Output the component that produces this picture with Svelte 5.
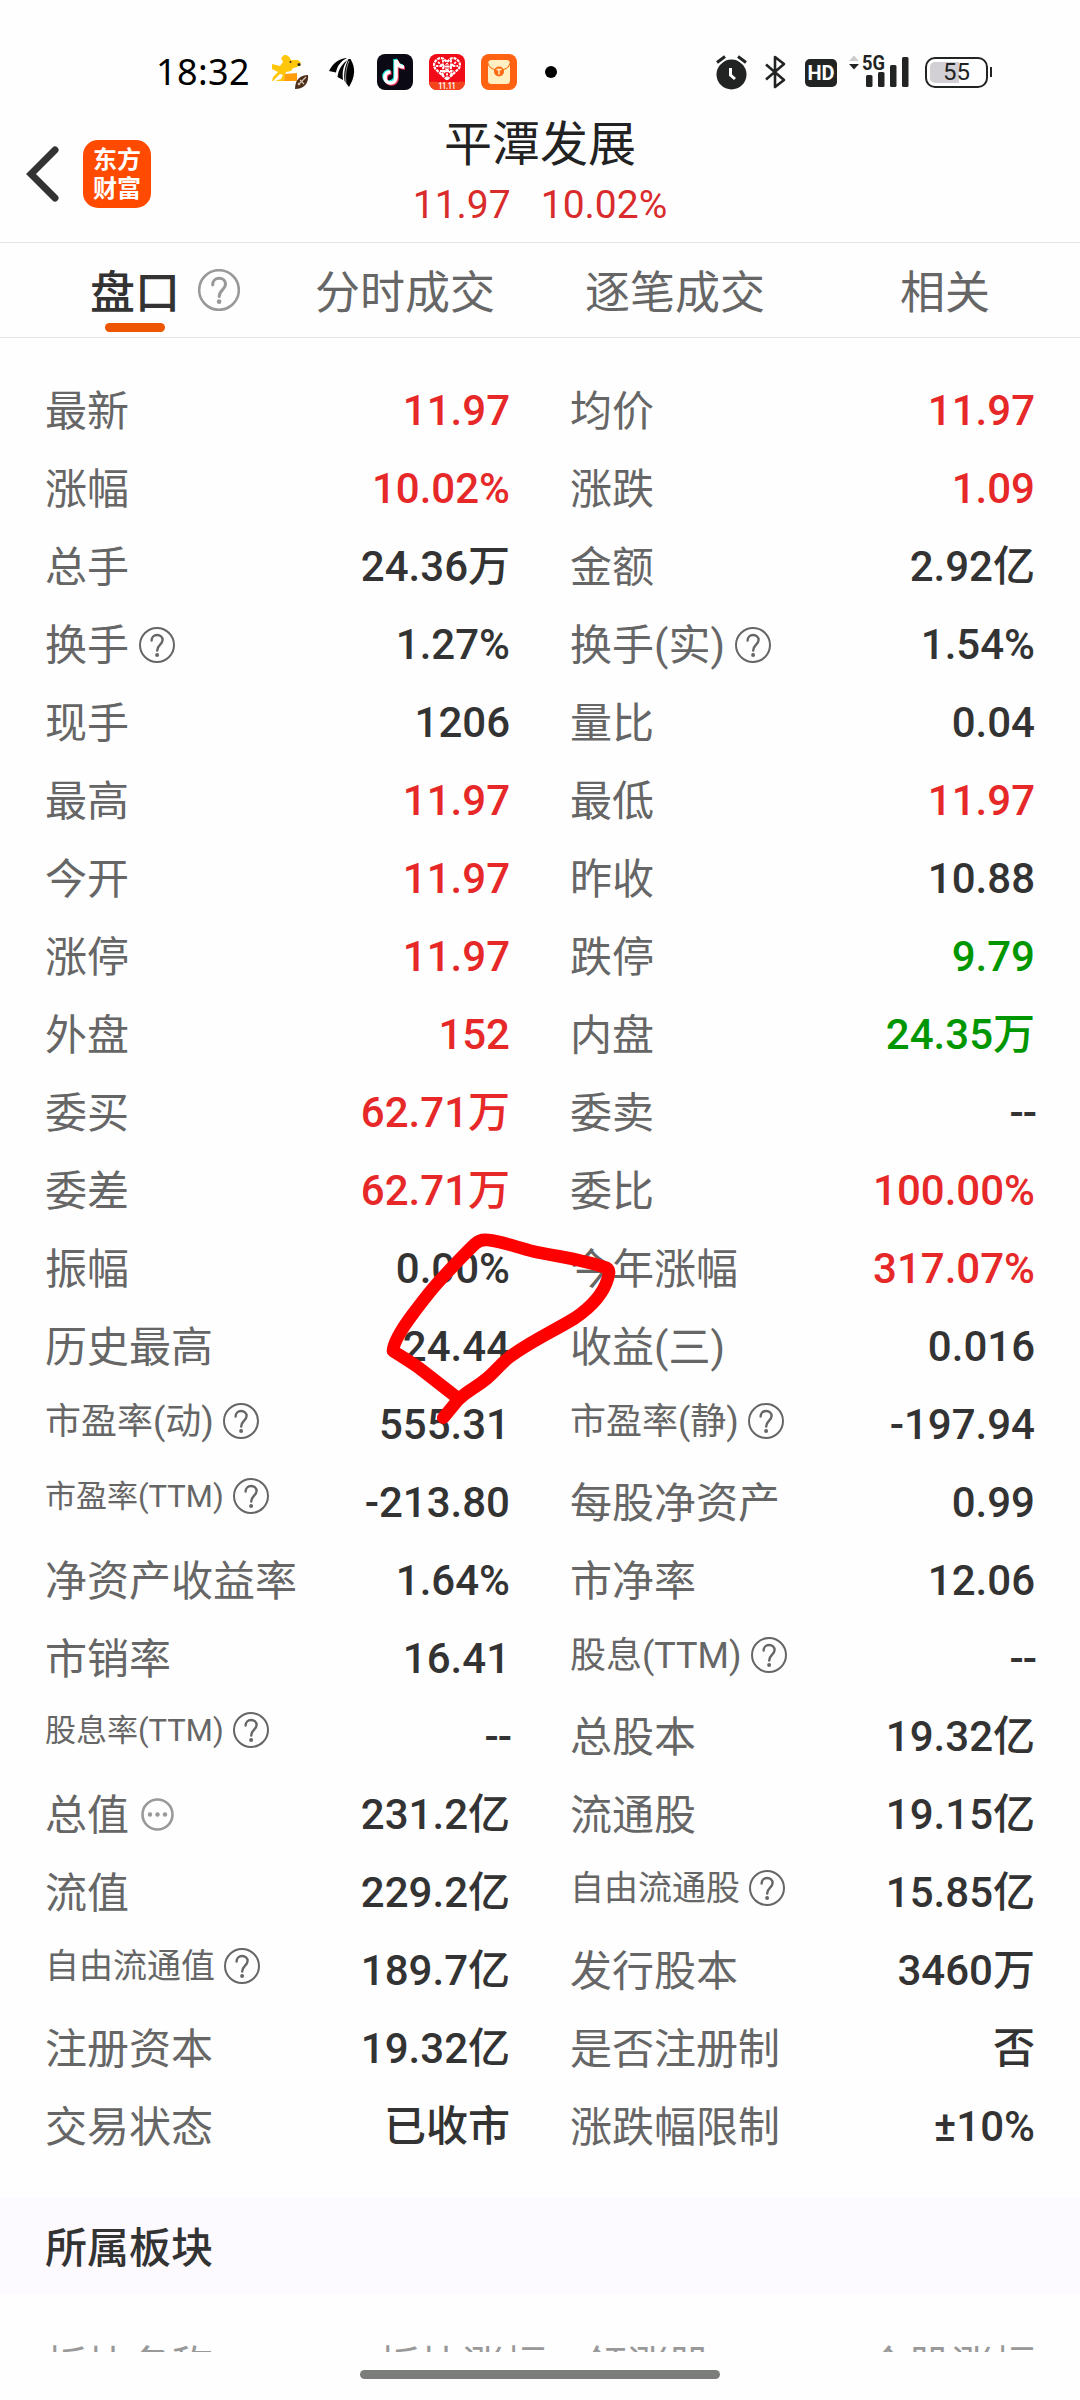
<script lang="ts">
  type Cell = {
    label: string;
    value: string;
    tone?: "up" | "down";
    size?: "s36" | "s34" | "s31";
    icon?: "help" | "more";
  };

  const tabs = ["盘口", "分时成交", "逐笔成交", "相关"];
  let active = $state(0);

  const cells: Cell[] = [
    { label: "最新", value: "11.97", tone: "up" },
    { label: "均价", value: "11.97", tone: "up" },
    { label: "涨幅", value: "10.02%", tone: "up" },
    { label: "涨跌", value: "1.09", tone: "up" },
    { label: "总手", value: "24.36万" },
    { label: "金额", value: "2.92亿" },
    { label: "换手", value: "1.27%", icon: "help" },
    { label: "换手(实)", value: "1.54%", icon: "help" },
    { label: "现手", value: "1206" },
    { label: "量比", value: "0.04" },
    { label: "最高", value: "11.97", tone: "up" },
    { label: "最低", value: "11.97", tone: "up" },
    { label: "今开", value: "11.97", tone: "up" },
    { label: "昨收", value: "10.88" },
    { label: "涨停", value: "11.97", tone: "up" },
    { label: "跌停", value: "9.79", tone: "down" },
    { label: "外盘", value: "152", tone: "up" },
    { label: "内盘", value: "24.35万", tone: "down" },
    { label: "委买", value: "62.71万", tone: "up" },
    { label: "委卖", value: "--" },
    { label: "委差", value: "62.71万", tone: "up" },
    { label: "委比", value: "100.00%", tone: "up" },
    { label: "振幅", value: "0.00%" },
    { label: "今年涨幅", value: "317.07%", tone: "up" },
    { label: "历史最高", value: "24.44" },
    { label: "收益(三)", value: "0.016" },
    { label: "市盈率(动)", value: "555.31", size: "s36", icon: "help" },
    { label: "市盈率(静)", value: "-197.94", size: "s36", icon: "help" },
    { label: "市盈率(TTM)", value: "-213.80", size: "s31", icon: "help" },
    { label: "每股净资产", value: "0.99" },
    { label: "净资产收益率", value: "1.64%" },
    { label: "市净率", value: "12.06" },
    { label: "市销率", value: "16.41" },
    { label: "股息(TTM)", value: "--", size: "s36", icon: "help" },
    { label: "股息率(TTM)", value: "--", size: "s31", icon: "help" },
    { label: "总股本", value: "19.32亿" },
    { label: "总值", value: "231.2亿", icon: "more" },
    { label: "流通股", value: "19.15亿" },
    { label: "流值", value: "229.2亿" },
    { label: "自由流通股", value: "15.85亿", size: "s34", icon: "help" },
    { label: "自由流通值", value: "189.7亿", size: "s34", icon: "help" },
    { label: "发行股本", value: "3460万" },
    { label: "注册资本", value: "19.32亿" },
    { label: "是否注册制", value: "否" },
    { label: "交易状态", value: "已收市" },
    { label: "涨跌幅限制", value: "±10%" },
  ];
</script>

{#snippet help(size: number, stroke: number)}
  <svg class="help" width={size} height={size} viewBox="0 0 36 36" fill="none" stroke="currentColor" stroke-width={stroke}>
    <circle cx="18" cy="18" r="17" />
    <path d="M12.6 13.6c0-3.4 2.4-5.6 5.5-5.6s5.5 2.100 5.500 5.100c0 4.400-5.400 4.900-5.400 10.400" stroke-linecap="round" stroke-width={stroke * 1.2} />
    <circle cx="18.100" cy="28" r="2" fill="currentColor" stroke="none" />
  </svg>
{/snippet}

<div class="screen">
  <div class="status">
    <span class="time">18:32</span>
    <svg class="app dog" width="37" height="36" viewBox="0 0 37 36">
      <path d="M0 10l8 2 3-4-2-4 3-3c4 0 6 2 7 5h5c3 0 5 2 5 5-3 1-5 3-8 3l-2 3-5 1-2 9H0l1-4 5-5-6-3z" fill="#ffc60a" />
      <path d="M13 20l12-1v8H12z" fill="#ff9d0a" />
      <path d="M4 24l4-4 3 1-2 4-9 3z" fill="#fefefe" />
      <circle cx="18.500" cy="8" r="1" fill="#222" />
      <circle cx="27" cy="10.500" r="1.500" fill="#222" />
      <path d="M23 35c0-9 5-14 13-14 1 8-4 14-13 14z" fill="#4b2d1c" />
      <path d="M26 31l8-8M28 26l4 4M26 29l2 2" stroke="#d9c4ae" stroke-width="1.200" />
    </svg>
    <svg class="app wing" width="27" height="30" viewBox="0 0 27 30">
      <path d="M18 1C11 1 4 6 0 14l7 1.500C8 9 12 4 18 1z" />
      <path d="M19 2.500C13 7 9.500 12 8.500 20l5.500 3C13 14 14.500 8 19 2.500z" />
      <path d="M19.500 2C16 9 14.500 16 15.500 24l4.500 6c6-10 7-19 1.500-28z" />
      <path d="M20 4c-3 7-4 14-3 22" fill="none" stroke="#fff" stroke-width=".6" />
    </svg>
    <svg class="app" width="36" height="36" viewBox="0 0 36 36">
      <rect width="36" height="36" rx="8" fill="#0b0a14" />
      <g fill="none" stroke-width="3.600">
        <path d="M18 5v17.500a5.500 5.500 0 1 1-5.500-5.500M18 5c1 4 4 7 8 7" stroke="#25e5e0" />
        <path d="M20 7v17.500a5.500 5.500 0 1 1-5.500-5.500M20 7c1 4 4 7 8 7" stroke="#f5335c" />
        <path d="M19 6v17.500a5.500 5.500 0 1 1-5.500-5.500M19 6c1 4 4 7 8 7" stroke="#fff" />
      </g>
    </svg>
    <svg class="app" width="36" height="36" viewBox="0 0 36 36">
      <rect width="36" height="36" rx="8" fill="#f10a18" />
      <path d="M0 28q5-1 8 0h20q4-1 8 0a8 8 0 0 1-8 8H8a8 8 0 0 1-8-8z" fill="#f4441e" />
      <path d="M18 25.500L6.500 15C2 9 9 2.500 14 4.500L18 8l4-3.500C27 2.500 34 9 29.500 15z" fill="none" stroke="#fff" stroke-width="2.200" stroke-dasharray="3 .8" />
      <path d="M9 8l15 13M27 8L12 21M7 12h22M11 17h14M14 6v15M22 6v15M18 9v16" stroke="#fff" stroke-width="1.800" stroke-dasharray="2.400 1" />
      <rect x="15.500" y="10" width="5" height="5" fill="#f10a18" />
      <path d="M17 10v5M19 10v5M15.500 12.500h5" stroke="#fff" />
      <text x="18" y="34.500" text-anchor="middle" textLength="17" lengthAdjust="spacingAndGlyphs" class="tiny">11.11</text>
    </svg>
    <svg class="app" width="36" height="36" viewBox="0 0 36 36">
      <rect width="36" height="36" rx="8" fill="#ff6211" />
      <rect x="7" y="6" width="22" height="24" rx="3.500" fill="#fff0c4" />
      <path d="M7 9c1 5 4 7 11 7s10-2 11-7" fill="none" stroke="#f7791e" stroke-width="1.200" />
      <circle cx="18" cy="17.500" r="5" fill="#ff6a13" />
      <path d="M15.500 15.500h5M18 15.500v5" stroke="#fff0c4" stroke-width="1.500" />
    </svg>
    <span class="dot"></span>

    <div class="system">
      <svg width="31" height="35" viewBox="0 0 31 35">
        <circle cx="15.500" cy="19.500" r="15" fill="#222423" />
        <path d="M1 7.500l8-6M30 7.500L22 1.500" stroke="#fefefe" stroke-width="7" />
        <path d="M1 7.500l8-6M30 7.500L22 1.500" stroke="#222423" stroke-width="3" />
        <path d="M14.500 13v7l4.500 4" fill="none" stroke="#fff" stroke-width="3" />
      </svg>
      <svg class="bt" width="22" height="34" viewBox="0 0 22 34">
        <path d="M1 9.500l18 15.500-9 7V2l9 7L1 24.500" fill="none" stroke="#222423" stroke-width="2.600" stroke-linejoin="round" />
      </svg>
      <span class="hd">HD</span>
      <svg class="signal" width="62" height="34" viewBox="0 0 62 34">
        <path d="M0 6l5-5.500L10 6z" fill="#ccc" />
        <path d="M0 9h10l-5 5.500z" fill="#222423" />
        <g fill="#222423">
          <rect x="17" y="20" width="6.500" height="12" rx="1.500" />
          <rect x="29" y="17" width="6.500" height="15" rx="1.500" />
          <rect x="41" y="10" width="6.500" height="22" rx="1.500" />
          <rect x="53" y="2" width="6.500" height="30" rx="1.500" />
        </g>
        <text x="13" y="15.300" textLength="23" lengthAdjust="spacingAndGlyphs" class="five">5G</text>
      </svg>
      <div class="battery">
        <span class="charge">55</span>
      </div>
      <span class="nub"></span>
    </div>
  </div>

  <header>
    <svg class="back" width="36" height="60" viewBox="0 0 36 60">
      <path d="M31 6L7 30l24 24" fill="none" stroke="#333" stroke-width="7" stroke-linecap="round" />
    </svg>
    <div class="logo">东方<br />财富</div>
    <div class="heading">
      <h1>平潭发展</h1>
      <p><span>11.97</span><span>10.02%</span></p>
    </div>
  </header>

  <nav>
    {#each tabs as tab, i}
      <button class="tab" class:tab--active={active === i} onclick={() => (active = i)}>
        {tab}
        {#if i === 0}
          <span class="tab-help">{@render help(42, 2.2)}</span>
        {/if}
      </button>
    {/each}
  </nav>

  <div class="quotes">
    {#each cells as cell}
      <div class="cell">
        <div class="label {cell.size ?? ''}">
          <span>{cell.label}</span>
          {#if cell.icon === "help"}
            {@render help(36, 2)}
          {:else if cell.icon === "more"}
            <svg class="more" width="33" height="33" viewBox="0 0 33 33">
              <circle cx="16.500" cy="16.500" r="15" fill="none" stroke="#999" stroke-width="2.600" />
              <g fill="#999">
                <circle cx="9" cy="16.500" r="2.200" />
                <circle cx="16.500" cy="16.500" r="2.200" />
                <circle cx="24" cy="16.500" r="2.200" />
              </g>
            </svg>
          {/if}
        </div>
        <div class="value {cell.tone ?? ''}" class:value--empty={cell.value === "--"}>{cell.value}</div>
      </div>
    {/each}
  </div>

  <h2>所属板块</h2>
  <div class="board-head">
    <span>板块名称</span>
    <span>板块涨幅</span>
    <span>领涨股</span>
    <span>个股涨幅</span>
  </div>
  <div class="home"></div>

  <!-- freehand marker stroke over the quotes -->
  <svg class="marker" width="420" height="260" viewBox="0 0 1260 780">
    <path
      d="M310 653L352 602C385 568 405 566 440 536C470 510 475 498 510 470C575 422 640 394 705 354C760 316 792 275 803 236Q812 212 800 204C730 178 650 170 580 154C530 142 490 125 445 120Q420 117 406 131C370 165 335 203 298 243C262 283 240 314 220 340C190 380 160 425 159 453C195 476 220 490 252 515L348 590"
      fill="none"
      stroke="#f00"
      stroke-width="38"
      stroke-linecap="round"
      stroke-linejoin="round"
    />
  </svg>
</div>

<style>
  :global(body) {
    background: #fefefe;
  }
  .screen {
    position: relative;
    width: 1080px;
    height: 2400px;
    overflow: hidden;
    background: #fefefe;
    color: #333;
    font-family: Roboto, "Noto Sans CJK SC", sans-serif;
  }
  svg {
    display: block;
    flex: none;
  }

  .status {
    display: flex;
    align-items: center;
    height: 76px;
    padding: 34px 88px 0 156px;
  }
  .time {
    width: 116px;
    font: 400 36px/40px "Noto Sans", sans-serif;
    letter-spacing: 0.4px;
    color: #000;
  }
  .app {
    margin-right: 16px;
  }
  .dog {
    margin-right: 20px;
  }
  .wing {
    margin-right: 21px;
  }
  .tiny {
    font: 700 9px Roboto, sans-serif;
    fill: #fff;
  }
  .dot {
    width: 12px;
    height: 12px;
    margin-left: 12px;
    border-radius: 50%;
    background: #000;
  }
  .system {
    display: flex;
    align-items: center;
    margin-left: auto;
  }
  .bt {
    margin-left: 18px;
  }
  .hd {
    width: 32px;
    height: 28px;
    margin: 2px 12px 0 18px;
    border-radius: 5px;
    background: #222423;
    color: #fff;
    font: 700 20px/29px Roboto, sans-serif;
    text-align: center;
  }
  .signal {
    overflow: visible;
  }
  .five {
    font: 700 21px Roboto, sans-serif;
    fill: #222423;
  }
  .battery {
    box-sizing: border-box;
    width: 63px;
    height: 31px;
    margin-left: 14px;
    padding: 3px;
    border: 2.5px solid #222423;
    border-radius: 10px;
  }
  .charge {
    display: block;
    height: 100%;
    border-radius: 5px;
    background: linear-gradient(to right, #d3d0d5 55%, transparent 55%);
    font: 400 24px/21px Roboto, sans-serif;
    text-align: center;
    color: #222423;
  }
  .nub {
    width: 2px;
    height: 10px;
    margin-left: 2px;
    background: #222423;
  }

  header {
    display: flex;
    align-items: center;
    height: 132px;
    border-bottom: 1px solid #e4e4e4;
  }
  .back {
    margin: -4px 23px 0 24px;
  }
  .logo {
    box-sizing: border-box;
    width: 68px;
    height: 68px;
    margin-top: -4px;
    padding-top: 3px;
    border-radius: 15px;
    background: #ff4a00;
    color: #fff;
    font: 700 24px/29px "Noto Sans CJK SC", sans-serif;
    text-align: center;
  }
  .heading {
    flex: 1;
    margin: -7px 151px 0 0;
    text-align: center;
  }
  h1 {
    margin: 0;
    font-size: 48px;
    font-weight: 400;
    line-height: 64px;
    color: #222;
  }
  p {
    display: flex;
    justify-content: center;
    gap: 30px;
    margin: 0;
    font-size: 39px;
    line-height: 56px;
    color: #d92b2b;
  }

  nav {
    display: grid;
    grid-template-columns: repeat(4, 1fr);
    height: 94px;
    border-bottom: 1px solid #e4e4e4;
  }
  .tab {
    position: relative;
    display: flex;
    align-items: center;
    justify-content: center;
    height: 94px;
    padding: 0 0 2px;
    border: 0;
    background: none;
    font: inherit;
    font-size: 45px;
    color: #666;
  }
  .tab--active {
    font-weight: 500;
    color: #333;
  }
  .tab--active::after {
    content: "";
    position: absolute;
    bottom: 5px;
    left: 105px;
    width: 60px;
    height: 9px;
    border-radius: 5px;
    background: #ee5500;
  }
  .tab-help {
    width: 42px;
    margin: 2px -60px 0 18px;
    color: #999;
  }

  .quotes {
    display: grid;
    grid-template-columns: 465px 465px;
    column-gap: 60px;
    grid-auto-rows: 78px;
    padding: 34px 45px 32px;
  }
  .cell {
    display: flex;
    justify-content: space-between;
    white-space: nowrap;
  }
  .label {
    display: flex;
    align-items: center;
    gap: 10px;
    align-self: flex-start;
    height: 1.46em;
    margin-top: 8px;
    font-size: 42px;
    line-height: 1.46em;
    color: #666;
  }
  .label span {
    padding-top: 1px;
  }
  .s36,
  .s34,
  .s31 {
    gap: 9px;
    margin-top: 9px;
  }
  .s36 {
    font-size: 36px;
  }
  .s34 {
    font-size: 34px;
  }
  .s31 {
    font-size: 31px;
  }
  .more {
    margin-left: 2px;
  }
  .value {
    font-size: 42px;
    font-weight: 500;
    line-height: 78px;
  }
  .value--empty {
    margin-right: -1px;
    letter-spacing: -1px;
  }
  .up {
    color: #e62828;
  }
  .down {
    color: #009600;
  }

  h2 {
    height: 96px;
    margin: 0;
    padding-left: 45px;
    background: #fdfaff;
    font-size: 42px;
    font-weight: 500;
    line-height: 102px;
  }
  .board-head {
    display: grid;
    grid-template-columns: 333px 207px 1fr auto;
    height: 58px;
    padding: 0 45px;
    overflow: hidden;
    font-size: 42px;
    line-height: 146px;
    color: #999;
  }
  .home {
    width: 360px;
    height: 9px;
    margin: 18px auto 0;
    border-radius: 5px;
    background: #7b7d7a;
  }
  .marker {
    position: absolute;
    left: 340px;
    top: 1200px;
    pointer-events: none;
  }
</style>
